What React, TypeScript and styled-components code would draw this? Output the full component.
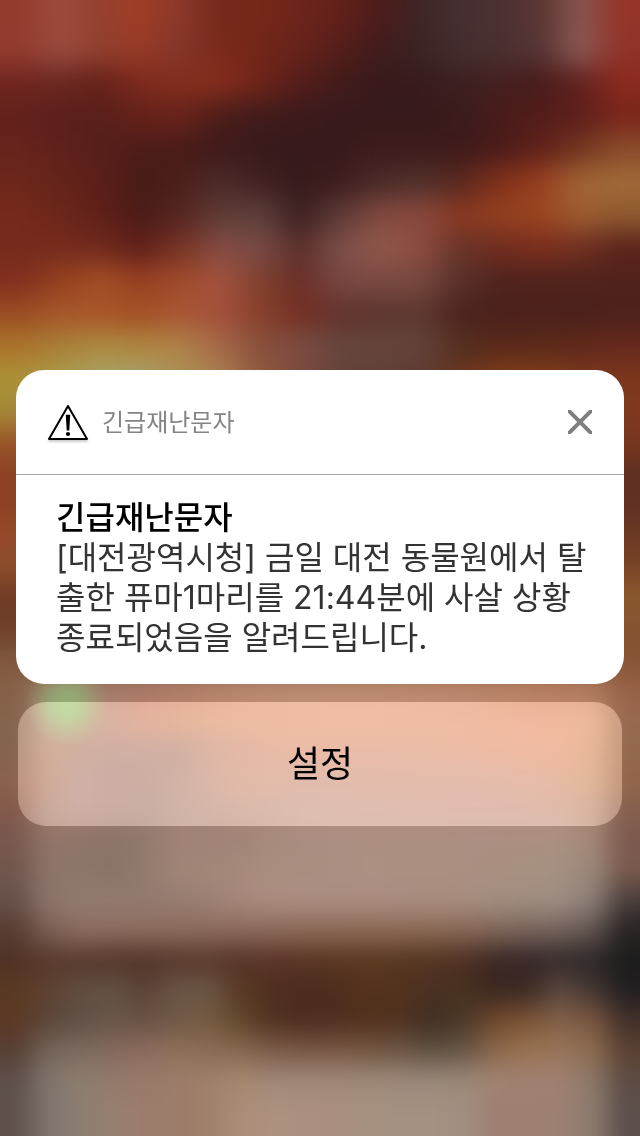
import React from "react";
import styled, { createGlobalStyle } from "styled-components";

const GlobalStyle = createGlobalStyle`
  *, *::before { box-sizing: border-box; }
  body {
    margin: 0;
    background: #4c2a20;
    font-family: Inter, "Noto Sans CJK KR", sans-serif;
  }
`;

/* Wallpaper bands, top to bottom: each one blends evenly spaced colours from left to right. */
type Band = { height: number; colors: string };

const bands: Band[] = [
  { height: 33, colors: "953b2e 9c4a3d 94402e 9f3d26 8a382a 75281c 752719 6c241b 62201a 4c1c1b 3e2525 452f30 4b3032 5a3633 885450 953529" },
  { height: 33, colors: "933b30 994a3f 91402e 983a26 83352a 7a2a1c 722519 66231a 541d1a 3f1c1b 3b2324 442d2e 4a2f30 573534 8a5853 90332b" },
  { height: 33, colors: "6f261f 6a2720 672119 7c2a1d 832d1e 852d1c 6f241a 541d1a 421b1a 381a1c 381a1c 3c1f20 44201f 481c1b 62221e 8a291e" },
  { height: 33, colors: "63201c 5c1f1b 58201a 652118 6a231a 4c1d19 401b1a 3c1a1b 381a1c 371a1c 371a1c 3a1b1b 481b1a 521c1a 5e1f1b 7a251b" },
  { height: 33, colors: "67231c 5f211b 561f1a 4e1c19 491b19 3f1a1a 381a1c 371a1c 391a1c 3c1b1a 3c1b1a 3e1a1a 4b1b19 602119 72351f 8a4a2a" },
  { height: 33, colors: "6d271a 65241a 5a1f18 481b17 4a1f1c 4c2a28 40201f 371a1c 3c1c1d 4a2a28 50302c 5a281f 803019 963f20 a26335 a16a39" },
  { height: 33, colors: "73291b 6d261a 5f2018 4b1b17 562420 5f3b37 5c3f3b 3c2120 5e3a36 80493f 88483c 8a3822 93401f 9a4522 9e5c31 8f5a30" },
  { height: 33, colors: "752b1d 742b1d 70291c 60201a 763424 844c44 784a45 5c302e 7c4e48 92584b 8c4c40 6a3428 702c1f 7c2e1d 703020 5c241c" },
  { height: 33, colors: "812f1e 95401f a34d25 983f21 a04a2c a3523e 80402f 6a3028 784642 7a4a42 78473e 58302a 50231d 50221b 50221b 50221b" },
  { height: 33, colors: "9a4d22 a5572a a95528 a54f24 a85634 a3503a 88402c 743023 63332c 5b352e 5c3830 4c241e 4b201b 4c201b 4b201b 4d211b" },
  { height: 33, colors: "ab742b a97f38 ab8a40 ad8640 b08248 a56848 88503c 7c4c42 65463e 66453c 64423a 54301f 5a2819 5c2a1a 60291a 66291c" },
  { height: 33, colors: "ab9237 aa9d4a a9a466 a8a06c a99253 a98050 90583f 7a4a3c 66423a 603f38 5c3a32 6c351f 82401c 82401c 7c381e 7c371c" },
  { height: 31, colors: "a58838 a58838 80381e 80381e" },
  { height: 31, colors: "9a5428 9a5428 78361e 78361e" },
  { height: 31, colors: "8c4224 8c4224 5e3020 5e3020" },
  { height: 31, colors: "8c4222 8c4222 603022 603022" },
  { height: 31, colors: "96492a 96492a 6c3822 6c3822" },
  { height: 31, colors: "8c4e2a 8c4e2a 784426 784426" },
  { height: 31, colors: "703a24 703a24 8c5a2e 8c5a2e" },
  { height: 31, colors: "70402a 70402a 845230 845230" },
  { height: 31, colors: "80583e 80583e 865434 865434" },
  { height: 30, colors: "866048 9c8068 a08470 a67a68 ab7a68 b07e6a b5826c b9886f bb8b72 bc8c74 bd8d74 bd8d74 bc8c73 bb8a72 ba8870 b98468 b88265 b67e62 b07c60 986248" },
  { height: 30, colors: "85644c a08672 a28872 ac8472 b8846f b9876f bc8a70 be8c73 bf8d74 c08e75 c08e75 c08e75 c08d74 c08d74 c08c73 c18a70 c18970 c18a6e be8b68 976a50" },
  { height: 30, colors: "846350 a4806a a28070 a07e74 a08074 a08072 ac8676 b48876 b98a76 bb8b76 bb8b77 bb8b78 bb8c78 bb8c76 bc8b76 be8b74 bf8a72 bf8a70 b8886a 94684c" },
  { height: 30, colors: "8c624c a27c6a a08078 9c7e74 9c7e72 a08276 ac8878 b48c78 b48c7a b18c7c b18c7c b28c7c b38c7c b48c7c b48c7c b58c7a b78c78 b88a74 b4886a 94664c" },
  { height: 30, colors: "82594a 9c7c6c a08078 9c7e76 9a7e74 a08478 a4867a a8897a aa8c7e ae8e80 af8e80 b08e80 b08d80 b08d80 b08c80 b08c80 b08c7e b08b7a a88470 84604e" },
  { height: 30, colors: "785850 917468 917468 8c7268 91786c a08275 9f8376 a18477 a68a7c a98d80 ab8f82 ab8f81 ab8f80 ab8f80 ab8f82 ab8f82 ab8f82 ab9082 a48878 7c584e" },
  { height: 30, colors: "70564e 8e746a 8c756a 87736a 927a6c a08678 a38779 a68a7c aa8f80 a98e80 aa8f82 ac9082 ab8f81 ab8f80 ab8f82 a98f80 a89080 a49080 9a867a 7a5a4e" },
  { height: 30, colors: "68504a 8d746c 937a70 947a70 947a70 967b70 9c8174 a6887c aa8d80 ab8e82 ab8e82 ab8e82 a98e82 a98e80 a88e80 a48e80 a08e82 9e8e84 8c7e76 4a3e3c" },
  { height: 30, colors: "583c32 7c5f54 8c6d60 8c6c60 8c6c5e 8c6c5e 8c6b5e 8c6a5c 8c6a5a 8c6856 8c6856 8c6854 8c6854 8a6854 886756 806658 7a645a 74625a 625450 282322" },
  { height: 30, colors: "4f3226 56392c 56382d 543428 503328 56382c 583828 563426 583226 583424 58361f 5a381f 563620 52341f 4c2f22 3a2622 342628 342a2a 2c2828 1c1c1c" },
  { height: 30, colors: "5a3a22 5e4230 624c40 645246 5c4236 6a5446 6c5648 583824 502f1f 4c2b1e 4e2d1e 54321c 54321c 4a3024 48301f 3a261f 3c2a22 5c4840 443632 221e20" },
  { height: 30, colors: "5c3824 5a4438 605048 685448 6a5044 705846 74593f 60482a 4f301f 4e2c1e 502d1e 52311c 4f3120 402e22 4a3826 70482c 7c5436 806048 7a5640 42302a" },
  { height: 30, colors: "563e34 746459 7c6a5f 84695c 8a6c5e 8c7058 8a6c54 84684f 7c5a48 785644 785644 72563f 6c5444 5c5040 685444 8c684c 98724f 98745a 8c6c50 5c4032" },
  { height: 30, colors: "5e504a 80746c 8e7e70 927a6c 987a6a 9c7c6a a0806a a6886f a08878 a08878 a08878 9e8878 9c887a 9a887a 9c8878 a08470 a08072 a08070 8c7868 5c4c44" },
  { height: 30, colors: "5f504a 80746e 8c7e72 967f70 9c7c6a 9c7c6a a0806a aa8e78 ad917f ab9080 aa8f80 a69080 a49182 a49182 a28e80 9e7e72 9e8072 9c8072 8c7c70 5c4e4a" },
];

const WIDTH = 640;
const HEIGHT = 1136;
const BLEED = 60;

const WallpaperSvg = styled.svg`
  position: fixed;
  inset: 0;
  width: 100%;
  height: 100%;
`;

function Wallpaper() {
  const gradients: React.ReactNode[] = [];
  const strips: React.ReactNode[] = [];
  let top = 0;
  bands.forEach((band, row) => {
    const colors = band.colors.split(" ");
    const y0 = row === 0 ? -BLEED : top;
    const y1 = row === bands.length - 1 ? HEIGHT + BLEED : top + band.height;
    gradients.push(
      <linearGradient
        key={row}
        id={`band-${row}`}
        gradientUnits="userSpaceOnUse"
        x1={0}
        x2={WIDTH}
        y1={0}
        y2={0}
      >
        {colors.map((color, col) => (
          <stop key={col} offset={(col + 0.5) / colors.length} stopColor={`#${color}`} />
        ))}
      </linearGradient>
    );
    strips.push(
      <rect
        key={row}
        x={-BLEED}
        y={y0}
        width={WIDTH + BLEED * 2}
        height={y1 - y0}
        fill={`url(#band-${row})`}
        shapeRendering="crispEdges"
      />
    );
    top += band.height;
  });
  return (
    <WallpaperSvg
      viewBox={`0 0 ${WIDTH} ${HEIGHT}`}
      preserveAspectRatio="none"
      aria-hidden="true"
    >
      <defs>
        {gradients}
        <radialGradient id="glow">
          <stop offset="0" stopColor="#92ac74" />
          <stop offset="0.3" stopColor="#92ac74" stopOpacity="0.85" />
          <stop offset="0.7" stopColor="#92ac74" stopOpacity="0.3" />
          <stop offset="1" stopColor="#92ac74" stopOpacity="0" />
        </radialGradient>
        <filter
          id="soften"
          filterUnits="userSpaceOnUse"
          x={-BLEED}
          y={-BLEED}
          width={WIDTH + BLEED * 2}
          height={HEIGHT + BLEED * 2}
          colorInterpolationFilters="sRGB"
        >
          <feGaussianBlur stdDeviation="8 13" />
        </filter>
      </defs>
      <g filter="url(#soften)">{strips}</g>
      <circle cx="67" cy="704" r="42" fill="url(#glow)" />
    </WallpaperSvg>
  );
}

const Screen = styled.main`
  position: relative;
  display: flex;
  flex-direction: column;
  justify-content: center;
  gap: 18px;
  min-height: 100vh;
  padding: 60px 16px 0;
`;

const Card = styled.article`
  background: #fff;
  border-radius: 28px;
  overflow: hidden;
`;

const CardHeader = styled.header`
  display: flex;
  align-items: center;
  gap: 14px;
  height: 105px;
  padding: 0 32px;
  border-bottom: 1px solid #a4a4a4;
`;

const AppName = styled.span`
  flex: 1;
  padding-top: 2px;
  color: #848484;
  font-size: 24px;
  line-height: 32px;
`;

const CloseButton = styled.button`
  display: flex;
  padding: 0;
  border: 0;
  background: none;
  color: #7f7f7f;
  cursor: pointer;
`;

const Message = styled.div`
  padding: 23px 32px 26px 40px;
  font-size: 32px;
  line-height: 40px;
  word-break: break-all;
`;

const Title = styled.h1`
  margin: 0;
  color: #000;
  font-size: 32px;
  font-weight: 500;
  line-height: 40px;
`;

const Body = styled.p`
  margin: 0;
  color: #333;
`;

const ActionButton = styled.button`
  position: relative;
  height: 124px;
  margin: 0 2px;
  padding: 0;
  border: 0;
  background: none;
  color: #000;
  font-family: inherit;
  font-size: 36px;
  line-height: 48px;
  cursor: pointer;

  &::before {
    content: "";
    position: absolute;
    inset: 0;
    border-radius: 28px;
    background: #303030;
    mix-blend-mode: plus-lighter;
  }
`;

const ActionLabel = styled.span`
  position: relative;
`;

const WarningSvg = styled.svg`
  flex: none;
  filter: drop-shadow(0 2px 1px rgba(0, 0, 0, 0.2));
`;

function WarningIcon() {
  return (
    <WarningSvg width="40" height="40" viewBox="0 0 40 40" aria-hidden="true">
      <path
        d="M20 4 L39 37 H1 Z"
        fill="#fff"
        stroke="#000"
        strokeWidth="2"
        strokeLinejoin="round"
      />
      <path d="M17.8 12.8 H22.2 L21.3 28.4 H18.7 Z" fill="#000" />
      <circle cx="20" cy="32" r="2.1" fill="#000" />
    </WarningSvg>
  );
}

function CloseIcon() {
  return (
    <svg width="24" height="24" viewBox="0 0 24 24" aria-hidden="true">
      <path d="M0 0 L24 24 M24 0 L0 24" stroke="currentColor" strokeWidth="4" />
    </svg>
  );
}

export default function App() {
  return (
    <>
      <GlobalStyle />
      <Wallpaper />
      <Screen>
        <Card>
          <CardHeader>
            <WarningIcon />
            <AppName>긴급재난문자</AppName>
            <CloseButton type="button" aria-label="닫기">
              <CloseIcon />
            </CloseButton>
          </CardHeader>
          <Message>
            <Title>긴급재난문자</Title>
            <Body>
              [대전광역시청] 금일 대전 동물원에서 탈출한 퓨마1마리를 21:44분에 사살 상황 종료되었음을 알려드립니다.
            </Body>
          </Message>
        </Card>
        <ActionButton type="button">
          <ActionLabel>설정</ActionLabel>
        </ActionButton>
      </Screen>
    </>
  );
}
